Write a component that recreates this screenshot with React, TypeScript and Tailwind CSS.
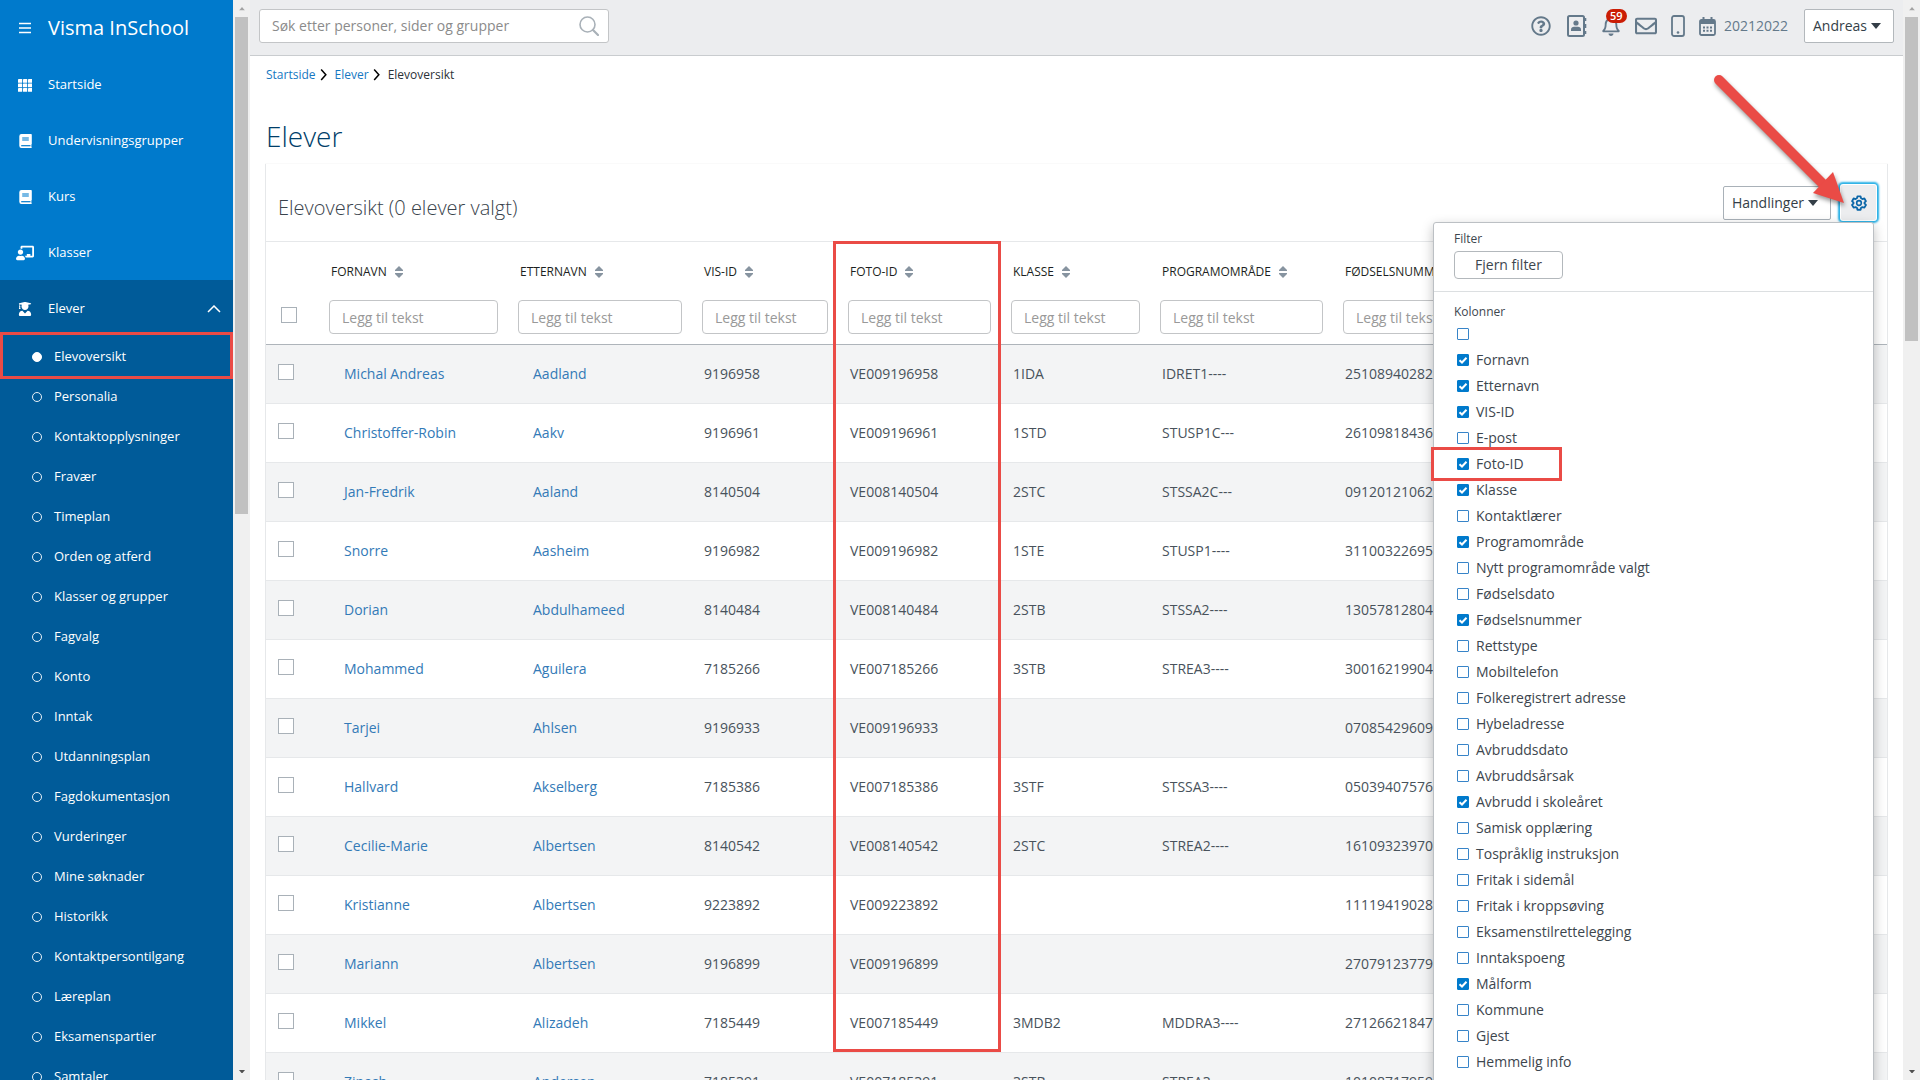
import React, { useState } from "react";
import { FaChalkboardTeacher, FaUserGraduate, FaRegQuestionCircle, FaRegBell, FaRegEnvelope } from "react-icons/fa";

type IconProps = { className?: string };

const GridIcon = ({ className }: IconProps) => (
  <svg viewBox="0 0 14 13" className={className} fill="currentColor" aria-hidden="true">
    {[0, 5, 10].map((x) => [0, 4.5, 9].map((y) => <rect key={`${x}-${y}`} x={x} y={y} width="4.200" height="3.800" rx="0.4" />))}
  </svg>
);

const BookIcon = ({ className }: IconProps) => (
  <svg viewBox="0 0 13 14" className={className} aria-hidden="true">
    <path fill="#fff" d="M2.5 0H12a.8.8 0 0 1 .8.8v9a.8.8 0 0 1-.4.7v2.2c.3.1.4.3.4.6s-.3.7-.6.7H2.5A2.3 2.3 0 0 1 .3 11.700V2.300A2.300 2.300 0 0 1 2.500 0Z" />
    <path stroke="#4ba3dd" strokeWidth="1.300" fill="none" d="M3.200 4h6.600M3.200 6h6.600" />
    <path stroke="#007acc" strokeWidth="1.200" fill="none" d="M2.200 11.700H11.500" />
  </svg>
);

const MenuIcon = ({ className }: IconProps) => (
  <svg viewBox="0 0 12 12" className={className} stroke="currentColor" strokeWidth="1.500" aria-hidden="true">
    <path d="M0 1.500h12M0 6h12M0 10.500h12" />
  </svg>
);

const SearchIcon = ({ className }: IconProps) => (
  <svg viewBox="0 0 20 20" className={className} fill="none" stroke="currentColor" aria-hidden="true">
    <circle cx="8.500" cy="8.500" r="7.500" strokeWidth="1.600" />
    <path d="m14 14 5 5" strokeWidth="2.200" strokeLinecap="round" />
  </svg>
);

const ContactsIcon = ({ className }: IconProps) => (
  <svg viewBox="0 0 20 22" className={className} fill="none" stroke="currentColor" aria-hidden="true">
    <rect x="1" y="1" width="16" height="20" rx="1.500" strokeWidth="2" />
    <path d="M18.500 3v3M18.500 9v4M18.500 16v3" strokeWidth="1.600" />
    <circle cx="9" cy="8" r="2.600" fill="currentColor" stroke="none" />
    <path d="M4 16v-1.500c0-1.800 1.500-2.700 3-2.700h4c1.500 0 3 .9 3 2.700V16Z" fill="currentColor" stroke="none" />
  </svg>
);

const PhoneIcon = ({ className }: IconProps) => (
  <svg viewBox="0 0 14 22" className={className} fill="none" stroke="currentColor" aria-hidden="true">
    <rect x="1" y="1" width="12" height="20" rx="2" strokeWidth="1.800" />
    <circle cx="7" cy="17.500" r="1.300" fill="currentColor" stroke="none" />
  </svg>
);

const CalendarIcon = ({ className }: IconProps) => (
  <svg viewBox="0 0 17 19" className={className} fill="none" stroke="currentColor" aria-hidden="true">
    <rect x="1" y="3" width="15" height="15" rx="1.500" strokeWidth="1.800" />
    <path d="M1 5h15" strokeWidth="4" />
    <path d="M4.500 0v4M12.500 0v4" strokeWidth="2" />
    <path d="M4 10.500h2M7.500 10.500h2M11 10.500h2M4 13.800h2M7.500 13.800h2M11 13.800h2" strokeWidth="2" />
  </svg>
);

const GearIcon = ({ className }: IconProps) => (
  <svg viewBox="0 0 24 24" className={className} fill="none" stroke="currentColor" strokeWidth="2.700" strokeLinejoin="round" aria-hidden="true">
    <path d="M9.600 2h4.800l.7 3 2 1.100 3-.9 2.300 4.100-2.200 2.200v1.200l2.200 2.200-2.300 4-3-.8-2 1.100-.7 2.900H9.600l-.7-2.900-2-1.100-3 .8-2.300-4 2.200-2.200v-1.200L1.600 9.300l2.300-4.100 3 .9 2-1.100Z" />
    <circle cx="12" cy="12" r="3.500" strokeWidth="2.400" />
  </svg>
);

const SortIcon = ({ className }: IconProps) => (
  <svg viewBox="0 0 8 12" className={className} fill="currentColor" aria-hidden="true">
    <path d="M4 0 8 4v1H0V4ZM4 12 0 8V7h8v1Z" />
  </svg>
);

const Caret = ({ className }: IconProps) => (
  <svg viewBox="0 0 10 6" className={className} fill="currentColor" aria-hidden="true">
    <path d="M0 0h10L5 6Z" />
  </svg>
);

const Chevron = ({ className }: IconProps) => (
  <svg viewBox="0 0 6 10" className={className} fill="none" stroke="currentColor" strokeWidth="1.300" aria-hidden="true">
    <path d="m1 .5 4 4.500-4 4.500" />
  </svg>
);

const subPages = [
  "Elevoversikt", "Personalia", "Kontaktopplysninger", "Fravær", "Timeplan", "Orden og atferd",
  "Klasser og grupper", "Fagvalg", "Konto", "Inntak", "Utdanningsplan", "Fagdokumentasjon",
  "Vurderinger", "Mine søknader", "Historikk", "Kontaktpersontilgang", "Læreplan", "Eksamenspartier", "Samtaler",
];

const mainPages = [
  { label: "Startside", icon: <GridIcon className="w-3.5" /> },
  { label: "Undervisningsgrupper", icon: <BookIcon className="w-[13px]" /> },
  { label: "Kurs", icon: <BookIcon className="w-[13px]" /> },
  { label: "Klasser", icon: <FaChalkboardTeacher className="h-4 w-[18px]" /> },
];

const columns = ["Fornavn", "Etternavn", "VIS-ID", "Foto-ID", "Klasse", "Programområde", "Fødselsnummer"];

const students = [
  ["Michal Andreas", "Aadland", "9196958", "VE009196958", "1IDA", "IDRET1----", "25108940282"],
  ["Christoffer-Robin", "Aakv", "9196961", "VE009196961", "1STD", "STUSP1C---", "26109818436"],
  ["Jan-Fredrik", "Aaland", "8140504", "VE008140504", "2STC", "STSSA2C---", "09120121062"],
  ["Snorre", "Aasheim", "9196982", "VE009196982", "1STE", "STUSP1----", "31100322695"],
  ["Dorian", "Abdulhameed", "8140484", "VE008140484", "2STB", "STSSA2----", "13057812804"],
  ["Mohammed", "Aguilera", "7185266", "VE007185266", "3STB", "STREA3----", "30016219904"],
  ["Tarjei", "Ahlsen", "9196933", "VE009196933", "", "", "07085429609"],
  ["Hallvard", "Akselberg", "7185386", "VE007185386", "3STF", "STSSA3----", "05039407576"],
  ["Cecilie-Marie", "Albertsen", "8140542", "VE008140542", "2STC", "STREA2----", "16109323970"],
  ["Kristianne", "Albertsen", "9223892", "VE009223892", "", "", "11119419028"],
  ["Mariann", "Albertsen", "9196899", "VE009196899", "", "", "27079123779"],
  ["Mikkel", "Alizadeh", "7185449", "VE007185449", "3MDB2", "MDDRA3----", "27126621847"],
  ["Zinash", "Andersen", "7185391", "VE007185391", "3STB", "STREA3----", "10108717959"],
];

const columnOptions: [string, boolean][] = [
  ["", false], ["Fornavn", true], ["Etternavn", true], ["VIS-ID", true], ["E-post", false], ["Foto-ID", true],
  ["Klasse", true], ["Kontaktlærer", false], ["Programområde", true], ["Nytt programområde valgt", false],
  ["Fødselsdato", false], ["Fødselsnummer", true], ["Rettstype", false], ["Mobiltelefon", false],
  ["Folkeregistrert adresse", false], ["Hybeladresse", false], ["Avbruddsdato", false], ["Avbruddsårsak", false],
  ["Avbrudd i skoleåret", true], ["Samisk opplæring", false], ["Tospråklig instruksjon", false],
  ["Fritak i sidemål", false], ["Fritak i kroppsøving", false], ["Eksamenstilrettelegging", false],
  ["Inntakspoeng", false], ["Målform", true], ["Kommune", false], ["Gjest", false], ["Hemmelig info", false],
];

const ScrollTrack = ({ children }: { children: React.ReactNode }) => (
  <div className="flex w-[17px] shrink-0 flex-col items-center bg-[#f0f0f0]" aria-hidden="true">
    <div className="flex h-[17px] w-full shrink-0 items-center justify-center text-[#a3a3a3]">
      <Caret className="w-1.5 rotate-180" />
    </div>
    <div className="flex w-full flex-1 justify-center">{children}</div>
    <div className="flex h-[17px] w-full shrink-0 items-center justify-center text-[#505050]">
      <Caret className="w-1.5" />
    </div>
  </div>
);

function Sidebar() {
  return (
    <nav className="w-[233px] shrink-0 overflow-hidden bg-[#007acc] text-[13px] text-white" aria-label="Hovedmeny">
      <div className="flex h-14 items-center">
        <button className="flex w-12 justify-start pl-[19px]" aria-label="Meny">
          <MenuIcon className="w-3" />
        </button>
        <span className="text-xl font-medium">Visma InSchool</span>
      </div>
      {mainPages.map((page) => (
        <a key={page.label} href="#" className="flex h-14 items-center pt-0.5">
          <span className="flex w-12 justify-center pl-0.5">{page.icon}</span>
          {page.label}
        </a>
      ))}
      <div className="bg-[#005b99]">
        <button className="flex h-14 w-full items-center pt-0.5 pr-3 text-left">
          <span className="flex w-12 justify-center pl-0.5">
            <FaUserGraduate className="h-3.5 w-3.5" />
          </span>
          <span className="flex-1">Elever</span>
          <svg viewBox="0 0 14 8" className="w-3.5" fill="none" stroke="currentColor" strokeWidth="1.500" aria-hidden="true">
            <path d="m1 7 6-6 6 6" />
          </svg>
        </button>
        <ul>
          {subPages.map((page, i) => (
            <li key={page} className="relative">
              <a href="#" className="flex h-10 items-center gap-3 pt-px pl-8">
                <span className={i === 0 ? "size-2.5 rounded-full border border-white bg-white" : "size-2.5 rounded-full border border-white/90"} />
                {page}
              </a>
              {i === 0 && <div className="pointer-events-none absolute inset-x-0 -top-1 -bottom-[3px] border-[3px] border-[#ea4b46]" />}
            </li>
          ))}
        </ul>
      </div>
    </nav>
  );
}

function TopBar() {
  return (
    <header className="flex h-14 shrink-0 items-start justify-between border-b border-[#c9cccf] bg-[#ecedef] pt-[9px] pr-[9px] pl-[9px]">
      <label className="flex h-[34px] w-[350px] items-center rounded-[3px] border border-[#c3c5c7] bg-white pr-[9px] pl-3">
        <input
          type="search"
          aria-label="Søk"
          placeholder="Søk etter personer, sider og grupper"
          className="min-w-0 flex-1 text-sm outline-none placeholder:text-[#8b8b8b]"
        />
        <SearchIcon className="w-5 text-[#a9b1b8]" />
      </label>
      <div className="flex h-[34px] items-center text-[#64798a]">
        <button aria-label="Hjelp" className="mr-4"><FaRegQuestionCircle className="size-5" /></button>
        <button aria-label="Kontakter" className="mr-3.5"><ContactsIcon className="w-5" /></button>
        <button aria-label="Varsler" className="relative mr-3.5">
          <FaRegBell className="size-5" />
          <span className="absolute -top-[7px] left-[5px] h-3.5 rounded-full bg-[#cb1d05] px-1 text-[11px] leading-3.5 font-semibold text-white">59</span>
        </button>
        <button aria-label="Meldinger" className="mr-3.5"><FaRegEnvelope className="size-[22px]" /></button>
        <button aria-label="Mobil" className="mr-3.5"><PhoneIcon className="w-3.5" /></button>
        <button className="mr-4 flex items-center gap-2 text-sm">
          <CalendarIcon className="w-[17px]" />
          20212022
        </button>
        <button className="flex h-[34px] items-center gap-1 rounded-[2px] border border-[#b3b8bc] bg-white pr-3 pl-2 text-sm font-medium text-[#343e47]">
          Andreas
          <Caret className="w-2.5" />
        </button>
      </div>
    </header>
  );
}

function ColumnOption({ name, initial }: { name: string; initial: boolean }) {
  const [checked, setChecked] = useState(initial);
  return (
    <li className="relative">
      <label className="flex h-[26px] items-center gap-[7px]">
        <span className="grid size-3">
          <input
            type="checkbox"
            checked={checked}
            aria-label={name || "Velg"}
            onChange={() => setChecked(!checked)}
            className="col-start-1 row-start-1 size-3 appearance-none rounded-[1px] border border-[#3784c8] bg-white checked:border-[#007acc] checked:bg-[#007acc]"
          />
          {checked && (
            <svg viewBox="0 0 12 12" className="pointer-events-none col-start-1 row-start-1 size-3" fill="none" stroke="#fff" strokeWidth="2" aria-hidden="true">
              <path d="M2.500 6.200 5 8.500l4.500-4.700" />
            </svg>
          )}
        </span>
        {name}
      </label>
      {name === "Foto-ID" && (
        <div className="pointer-events-none absolute -top-1 -left-[26px] h-[34px] w-[131px] border-[3px] border-[#ea4b46]" />
      )}
    </li>
  );
}

function SettingsMenu() {
  return (
    <div className="absolute top-full right-0.5 z-10 mt-0.5 h-[900px] w-[441px] rounded-[3px] border border-[#bcc0c4] bg-white text-sm text-[#3d464e] shadow-[0_4px_12px_rgba(0,0,0,0.25)]">
      <div className="border-b border-[#dcdfe1] px-5 pt-2 pb-3">
        <div className="text-xs leading-4">Filter</div>
        <button className="mt-1 h-7 w-[109px] rounded-[4px] border border-[#b3b8bc] bg-white">Fjern filter</button>
      </div>
      <div className="px-5 pt-3">
        <div className="text-xs leading-4">Kolonner</div>
        <ul className="pt-px pl-[3px]">
          {columnOptions.map(([name, on]) => (
            <ColumnOption key={name} name={name} initial={on} />
          ))}
        </ul>
      </div>
    </div>
  );
}

const PointerArrow = () => (
  <svg viewBox="0 0 140 140" className="pointer-events-none absolute right-[27px] bottom-2.5 z-20 size-[140px] drop-shadow-[1px_3px_2px_rgba(0,0,0,0.4)]" aria-hidden="true">
    <path d="M10 10 116 116" stroke="#ea4b46" strokeWidth="10" strokeLinecap="round" />
    <path d="M135 133 124 102 104 123Z" fill="#ea4b46" />
  </svg>
);

const checkboxClass = "block size-4 appearance-none border border-[#a9b1b8] bg-white checked:bg-[#007acc]";

function StudentTable() {
  return (
    <div className="relative border-t border-[#e6e8ea]">
      <table className="w-full table-fixed text-left text-sm text-[#48525b]">
        <colgroup>
          <col className="w-[53px]" />
          <col className="w-[189px]" />
          <col className="w-[184px]" />
          <col className="w-[146px]" />
          <col className="w-[163px]" />
          <col className="w-[149px]" />
          <col className="w-[183px]" />
          <col />
        </colgroup>
        <thead className="border-b border-[#aeb4ba]">
          <tr className="h-[57px] text-xs font-medium text-[#1c1f22] uppercase">
            <td />
            {columns.map((name) => (
              <th key={name} scope="col" className="pt-0.5 pl-3 font-medium whitespace-nowrap">
                <button className="flex items-center gap-2 uppercase">
                  {name}
                  <SortIcon className="w-2 text-[#8794a0]" />
                </button>
              </th>
            ))}
          </tr>
          <tr className="h-[45px]">
            <td className="pb-3 pl-[15px]">
              <input type="checkbox" aria-label="Velg alle" className={checkboxClass} />
            </td>
            {columns.map((name, i) => (
              <td key={name} className="px-2.5 pb-2">
                <input
                  type="text"
                  aria-label={`Filtrer ${name}`}
                  placeholder="Legg til tekst"
                  className={
                    i === columns.length - 1
                      ? "block h-[34px] w-40 rounded-[4px] border border-[#c3c5c7] bg-white px-3 placeholder:text-[#999]"
                      : "block h-[34px] w-full rounded-[4px] border border-[#c3c5c7] bg-white px-3 placeholder:text-[#999]"
                  }
                />
              </td>
            ))}
          </tr>
        </thead>
        <tbody>
          {students.map((row) => (
            <tr key={row[2]} className="h-[59px] border-b border-[#e6e8ea] odd:bg-[#f3f4f5]">
              <td className="pb-1 pl-3">
                <input type="checkbox" aria-label={`Velg ${row[0]} ${row[1]}`} className={checkboxClass} />
              </td>
              {row.map((cell, i) =>
                i < 2 ? (
                  <td key={i} className="pl-[25px]">
                    <a href="#" className="text-[#337ab7]">{cell}</a>
                  </td>
                ) : (
                  <td key={i} className="pl-3">{cell}</td>
                ),
              )}
            </tr>
          ))}
        </tbody>
      </table>
      <div className="pointer-events-none absolute -top-px left-[567px] h-[811px] w-[168px] border-[3px] border-[#ea4b46]" />
    </div>
  );
}

export default function App() {
  return (
    <div className="flex h-screen overflow-hidden bg-white font-['Open_Sans',sans-serif]">
      <Sidebar />
      <ScrollTrack>
        <div className="h-[47.5%] w-[13px] bg-[#c1c1c1]" />
      </ScrollTrack>
      <div className="flex min-w-0 flex-1 flex-col">
        <TopBar />
        <main className="min-h-0 flex-1 overflow-hidden pr-[15px] pl-[15px]">
          <nav className="flex items-center gap-1 pt-2.5 pl-px text-xs leading-[18px]" aria-label="Brødsmuler">
            <a href="#" className="text-[#1678c2]">Startside</a>
            <Chevron className="w-[7px]" />
            <a href="#" className="ml-1 text-[#1678c2]">Elever</a>
            <Chevron className="w-[7px]" />
            <span className="ml-1 text-[#2b3238]">Elevoversikt</span>
          </nav>
          <h1 className="mt-8 pl-px text-[28px] leading-10 font-light text-[#003e69]">Elever</h1>
          <section className="mt-2 border-x border-[#e6e8ea] shadow-[0_-1px_1px_rgba(0,0,0,0.02)]">
            <div className="flex h-[77px] items-start justify-between pt-[21px] pr-[11px] pl-3">
              <h2 className="pt-[9px] text-xl font-light text-[#39434c]">Elevoversikt (0 elever valgt)</h2>
              <div className="relative flex items-center gap-2.5">
                <button className="flex h-[34px] items-center gap-1 rounded-[2px] border border-[#a9b1b8] bg-white pr-3 pl-2 text-sm font-medium text-[#343e47]">
                  Handlinger
                  <Caret className="w-2.5" />
                </button>
                <button aria-label="Innstillinger" className="flex size-[35px] items-center justify-center rounded-[2px] bg-[#ecedef] text-[#0a66a8] shadow-[0_0_0_1px_#fff,0_0_2px_3px_#26b0e6]">
                  <GearIcon className="size-4" />
                </button>
                <PointerArrow />
                <SettingsMenu />
              </div>
            </div>
            <StudentTable />
          </section>
        </main>
      </div>
      <ScrollTrack>
        <div className="h-[31%] w-[13px] bg-[#c1c1c1]" />
      </ScrollTrack>
    </div>
  );
}
